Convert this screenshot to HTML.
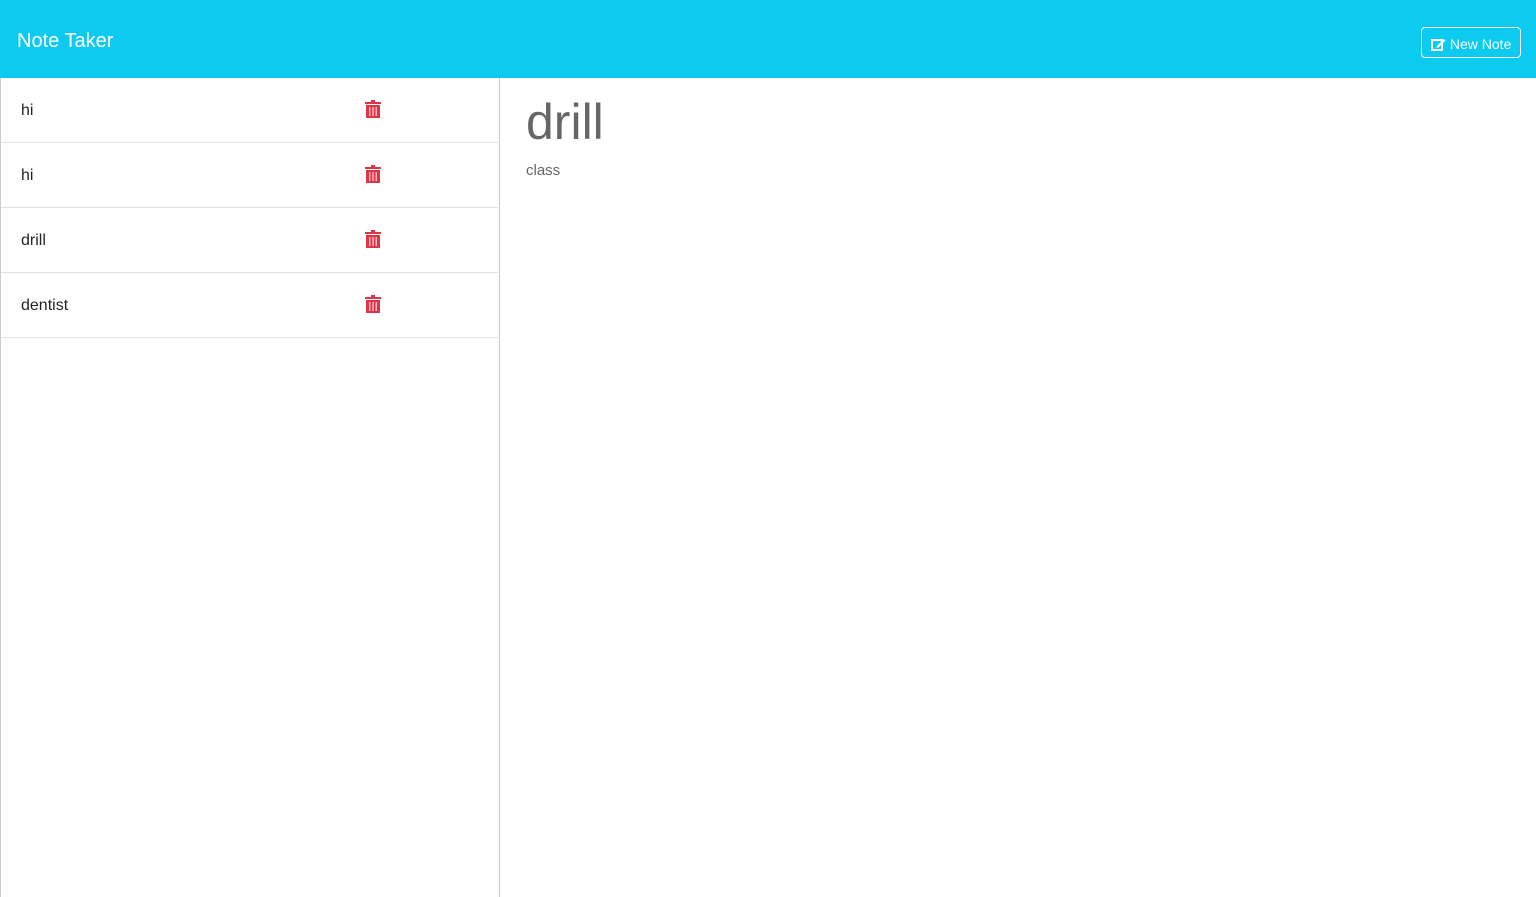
<!DOCTYPE html><html><head><style>
body{margin:0;font-family:"Liberation Sans",sans-serif;background:#fff;width:1536px;height:897px;overflow:hidden;position:relative}
.nav{position:absolute;left:0;top:0;width:1536px;height:78px;background:#0dcaf0}
.brand{position:absolute;left:17px;top:30px;color:#fff;font-size:20px}
.btn{position:absolute;left:1421px;top:27px;width:100px;height:31px;border:1px solid #fff;border-radius:4px;color:#fff;font-size:14px;box-sizing:border-box;padding:8px 0 0 9px}
.side{position:absolute;left:0;top:78px;width:500px;height:819px;border-left:1px solid #ccc;border-right:1px solid #ccc;box-sizing:border-box}
.item{position:relative;height:65px;border-bottom:1px solid #dee2e6;margin-right:1px;box-sizing:border-box;font-size:16px;color:#212529}
.item span{position:absolute;left:20px;top:24px}
.item svg{position:absolute;left:364px;top:22px}
h1{position:absolute;left:526px;top:93px;margin:0;font-weight:400;font-size:50px;color:#666}
.p{position:absolute;left:526px;top:162px;font-size:15px;color:#666}
</style></head><body>
<div class="nav"><div class="brand">Note Taker</div>
<div class="btn"><svg width="15" height="13" viewBox="0 0 15 13" style="vertical-align:-2px"><rect x="1" y="2" width="10" height="10" fill="none" stroke="#fff" stroke-width="2"/><path d="M6 8 L13 1 L14.5 2.5 L7.5 9.5 L5.5 10Z" fill="#fff"/></svg> New Note</div></div>
<div class="side">
<div class="item"><span>hi</span><svg width="16" height="18" viewBox="0 0 16 18"><rect x="0" y="2" width="16" height="2" fill="#dc3545"/><rect x="6" y="0" width="4" height="3" fill="#dc3545"/><rect x="1" y="5" width="14" height="13" fill="#dc3545"/><rect x="4" y="7" width="1.5" height="9" fill="#f5b8c0"/><rect x="7.3" y="7" width="1.5" height="9" fill="#f5b8c0"/><rect x="10.5" y="7" width="1.5" height="9" fill="#f5b8c0"/></svg></div>
<div class="item"><span>hi</span><svg width="16" height="18" viewBox="0 0 16 18"><rect x="0" y="2" width="16" height="2" fill="#dc3545"/><rect x="6" y="0" width="4" height="3" fill="#dc3545"/><rect x="1" y="5" width="14" height="13" fill="#dc3545"/><rect x="4" y="7" width="1.5" height="9" fill="#f5b8c0"/><rect x="7.3" y="7" width="1.5" height="9" fill="#f5b8c0"/><rect x="10.5" y="7" width="1.5" height="9" fill="#f5b8c0"/></svg></div>
<div class="item"><span>drill</span><svg width="16" height="18" viewBox="0 0 16 18"><rect x="0" y="2" width="16" height="2" fill="#dc3545"/><rect x="6" y="0" width="4" height="3" fill="#dc3545"/><rect x="1" y="5" width="14" height="13" fill="#dc3545"/><rect x="4" y="7" width="1.5" height="9" fill="#f5b8c0"/><rect x="7.3" y="7" width="1.5" height="9" fill="#f5b8c0"/><rect x="10.5" y="7" width="1.5" height="9" fill="#f5b8c0"/></svg></div>
<div class="item"><span>dentist</span><svg width="16" height="18" viewBox="0 0 16 18"><rect x="0" y="2" width="16" height="2" fill="#dc3545"/><rect x="6" y="0" width="4" height="3" fill="#dc3545"/><rect x="1" y="5" width="14" height="13" fill="#dc3545"/><rect x="4" y="7" width="1.5" height="9" fill="#f5b8c0"/><rect x="7.3" y="7" width="1.5" height="9" fill="#f5b8c0"/><rect x="10.5" y="7" width="1.5" height="9" fill="#f5b8c0"/></svg></div>
</div>
<h1>drill</h1><div class="p">class</div>
</body></html>
